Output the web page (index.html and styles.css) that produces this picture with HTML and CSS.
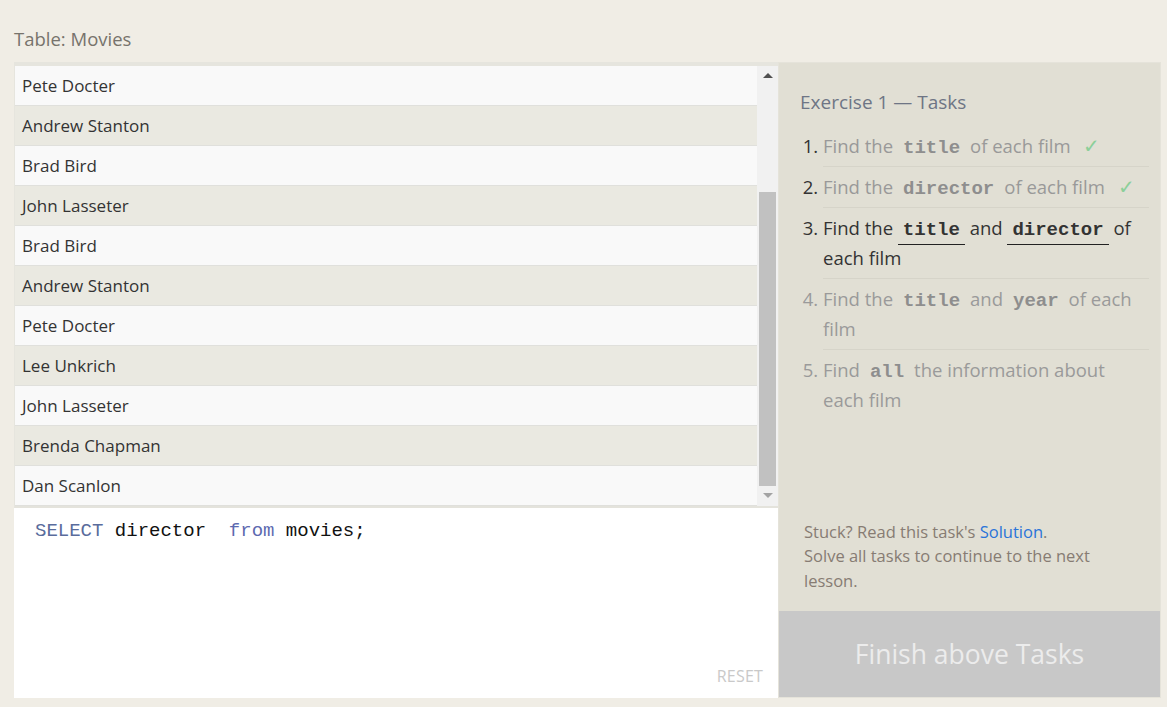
FILE: index.html
```html
<!DOCTYPE html>
<html lang="en">
<head>
<meta charset="utf-8">
<title>SQL Lesson</title>
<link rel="stylesheet" href="styles.css">
</head>
<body>
<div class="page">
  <h2 class="table-title">Table: Movies</h2>
  <div class="workspace">
    <div class="left">
      <div class="table-view">
        <div class="rows">
          <div class="row">Pete Docter</div>
          <div class="row alt">Andrew Stanton</div>
          <div class="row">Brad Bird</div>
          <div class="row alt">John Lasseter</div>
          <div class="row">Brad Bird</div>
          <div class="row alt">Andrew Stanton</div>
          <div class="row">Pete Docter</div>
          <div class="row alt">Lee Unkrich</div>
          <div class="row">John Lasseter</div>
          <div class="row alt">Brenda Chapman</div>
          <div class="row">Dan Scanlon</div>
        </div>
        <div class="scrollbar">
          <div class="arrow-box"><span class="arrow-up"></span></div>
          <div class="thumb"></div>
          <div class="arrow-box bottom"><span class="arrow-down"></span></div>
        </div>
      </div>
      <div class="editor">
        <div class="code"><span class="kw">SELECT</span> director  <span class="kw2">from</span> movies;</div>
        <div class="reset">RESET</div>
      </div>
    </div>
    <div class="right">
      <div class="tasks">
        <h3 class="tasks-title">Exercise 1 — Tasks</h3>
        <ol class="task-list">
          <li class="done"><span class="txt">Find the<code>title</code>of each film</span> <span class="check">✓</span></li>
          <li class="done"><span class="txt">Find the<code>director</code>of each film</span> <span class="check">✓</span></li>
          <li class="active">Find the <code>title</code> and <code>director</code> <span>of</span> <span>each film</span></li>
          <li class="todo">Find the<code>title</code>and<code>year</code><span>of each</span> <span>film</span></li>
          <li class="todo">Find<code>all</code><span>the information about</span> <span>each film</span></li>
        </ol>
      </div>
      <div class="help">
        <p>Stuck? Read this task's <a class="link">Solution</a>.</p>
        <p><span>Solve all tasks to continue to the next</span> <span>lesson.</span></p>
      </div>
      <div class="finish">Finish above Tasks</div>
    </div>
  </div>
</div>
</body>
</html>
```
FILE: styles.css
```css
* { box-sizing: border-box; }
html, body { margin: 0; padding: 0; }
body {
  background: #f0ede5;
  font-family: "Open Sans", "Noto Sans", sans-serif;
  color: #333;
}
.page {
  padding: 26px 6px 9px 14px;
}
.table-title {
  margin: 0 0 11px 0;
  font-size: 18.5px;
  line-height: 25px;
  font-weight: 400;
  color: #77736c;
}
.workspace {
  display: flex;
  height: 636px;
}
.left {
  width: 764px;
  display: flex;
  flex-direction: column;
}
.table-view {
  display: flex;
  height: 446px;
  border-top: 4px solid #e6e5de;
  border-bottom: 2px solid #e4e3dc;
  border-left: 1px solid #e6e5de;
}
.rows {
  flex: 1;
  overflow: hidden;
}
.row {
  height: 40px;
  line-height: 39px;
  padding-left: 7px;
  font-size: 17px;
  color: #333;
  background: #f9f9f9;
  border-bottom: 1px solid #e0e0dc;
}
.row.alt { background: #eae9e1; }
.scrollbar {
  width: 21px;
  background: #f1f1f1;
  display: flex;
  flex-direction: column;
  align-items: center;
}
.arrow-box {
  height: 17px;
  width: 100%;
  display: flex;
  align-items: center;
  justify-content: center;
  padding-top: 2px;
}
.arrow-box.bottom { margin-top: auto; padding-top: 0; padding-bottom: 4px; }
.arrow-up {
  width: 0; height: 0;
  border-left: 5px solid transparent;
  border-right: 5px solid transparent;
  border-bottom: 5px solid #505050;
}
.arrow-down {
  width: 0; height: 0;
  border-left: 5px solid transparent;
  border-right: 5px solid transparent;
  border-top: 5px solid #a3a3a3;
}
.thumb {
  width: 17px;
  height: 294px;
  margin-top: 109px;
  background: #c1c1c1;
}
.editor {
  flex: 1;
  background: #fff;
  display: flex;
  flex-direction: column;
  padding: 11px 15px 11px 21px;
}
.code {
  font-family: "Liberation Mono", "DejaVu Sans Mono", monospace;
  font-size: 19px;
  line-height: 24px;
  color: #111;
  white-space: pre;
}
.kw { color: #5a6c9c; }
.kw2 { color: #5d6ab0; }
.reset {
  margin-top: auto;
  align-self: flex-end;
  font-size: 16px;
  color: #c9c9c9;
  letter-spacing: 0.2px;
}
.right {
  width: 383px;
  background: #e1dfd4;
  border: 1px solid #e5e3da;
  display: flex;
  flex-direction: column;
}
.tasks {
  flex: 1;
  padding: 26px 11px 0 21px;
}
.tasks-title {
  margin: 0 0 11px 0;
  font-size: 19px;
  line-height: 26px;
  font-weight: 400;
  color: #6e7585;
}
.task-list {
  margin: 0;
  padding: 0 0 0 23px;
}
.task-list li {
  font-size: 18.5px;
  line-height: 30px;
  padding: 5px 10px 5px 0;
  border-bottom: 1px solid #d6d4c9;
  color: #333;
}
.task-list li:last-child { border-bottom: none; }
.task-list li.done .txt { color: #999; }
.task-list li.todo { color: #9a9a9a; }
.task-list code {
  font-family: "Liberation Mono", "DejaVu Sans Mono", monospace;
  font-weight: 700;
  font-size: 19px;
  line-height: 1;
  margin: 0 10px;
}
.task-list li.done code, .task-list li.todo code { color: #8e8e8e; }
.task-list li.active code {
  margin: 0;
  padding: 0 5px 3px;
  color: #333;
  border-bottom: 1px solid #222;
}
.check {
  color: #8ccf9a;
  font-size: 20px;
  margin-left: 8px;
}
.help {
  padding: 0 20px 18px 25px;
  font-size: 16.5px;
  line-height: 24.5px;
  color: #877c73;
}
.help p { margin: 0; }
.link { color: #2a74d9; text-decoration: none; }
.finish {
  height: 86px;
  background: #c8c8c8;
  color: #ececec;
  font-size: 26.5px;
  display: flex;
  align-items: center;
  justify-content: center;
}
```
